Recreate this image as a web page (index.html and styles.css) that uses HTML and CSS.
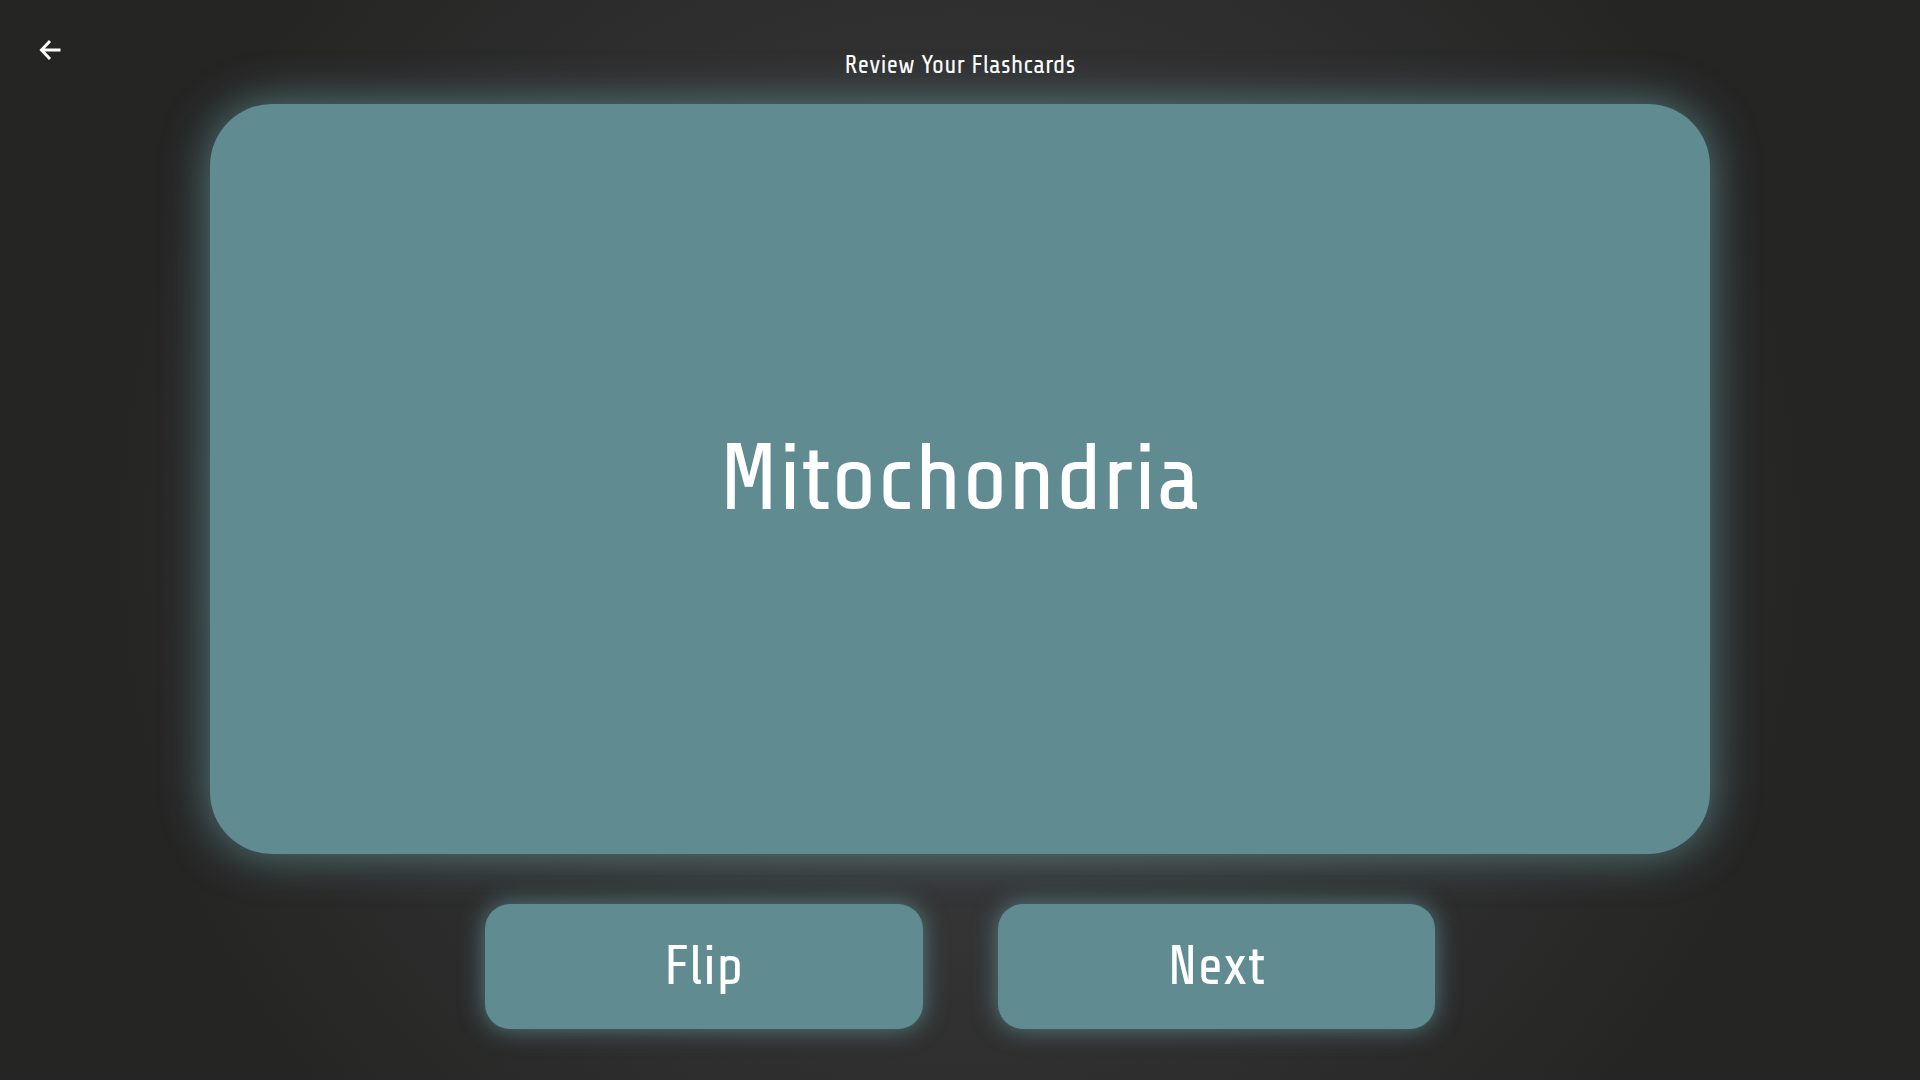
FILE: index.html
```html
<!DOCTYPE html>
<html lang="en">
<head>
  <meta charset="utf-8">
  <meta name="viewport" content="width=device-width, initial-scale=1">
  <title>Review Your Flashcards</title>
  <link rel="stylesheet" href="styles.css">
</head>
<body>
  <a class="back" href="#" aria-label="Back">
    <svg class="back-icon" viewBox="0 0 24 24" aria-hidden="true">
      <path d="M12 3 3.500 12l8.500 9M4 12H22.500"/>
    </svg>
  </a>
  <main class="review">
    <h1 class="title">Review Your Flashcards</h1>
    <section class="card">
      <p class="term">Mitochondria</p>
    </section>
    <div class="actions">
      <button class="action" type="button">Flip</button>
      <button class="action" type="button">Next</button>
    </div>
  </main>
</body>
</html>
```

FILE: styles.css
```css
* {
  box-sizing: border-box;
}

body {
  margin: 0;
  min-height: 100vh;
  background: radial-gradient(circle, #404042, #252524 78%) no-repeat;
  color: #fff;
  font-family: "Share Tech", "Liberation Sans Narrow", Roboto, sans-serif;
}

.back {
  position: absolute;
  top: 38px;
  left: 38px;
  color: inherit;
}

.back-icon {
  display: block;
  width: 24px;
  height: 24px;
  fill: none;
  stroke: currentColor;
  stroke-width: 3;
}

.review {
  display: flex;
  flex-direction: column;
  align-items: center;
  padding: 48px 24px;
}

.title {
  margin: 0 0 22px;
  font-size: 25px;
  font-weight: 400;
  line-height: 34px;
}

.card {
  display: flex;
  align-items: center;
  justify-content: center;
  width: 100%;
  max-width: 1500px;
  aspect-ratio: 2;
  border-radius: 62px;
  background: #5f8b91;
  box-shadow: 0 0 46px #5f8b91d9;
}

.term {
  margin: 0;
  font-size: 94px;
  line-height: 120px;
}

.actions {
  display: flex;
  gap: 75px;
  width: 100%;
  max-width: 950px;
  margin-top: 50px;
}

.action {
  flex: 1;
  padding: 30px;
  border: 0;
  border-radius: 25px;
  background: #5f8b91;
  box-shadow: 0 0 25px #5f8b91d9;
  color: inherit;
  font: inherit;
  font-size: 55px;
  line-height: 65px;
  cursor: pointer;
}
```
